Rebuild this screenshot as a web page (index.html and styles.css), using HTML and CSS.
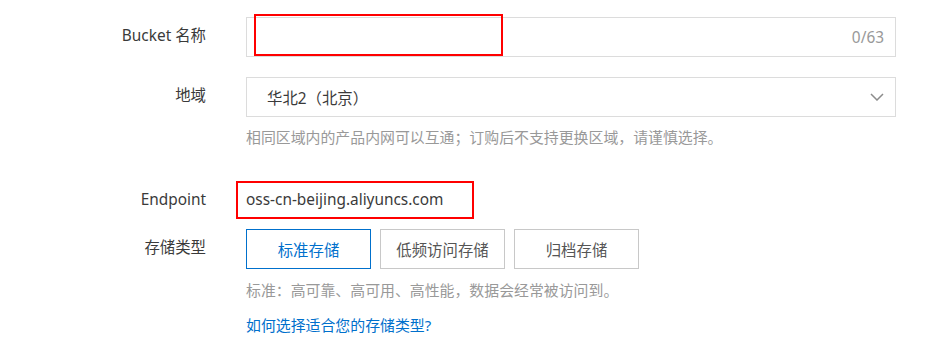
FILE: index.html
```html
<!DOCTYPE html>
<html lang="zh-CN">
<head>
<meta charset="utf-8">
<title>创建 Bucket</title>
<link rel="stylesheet" href="styles.css">
</head>
<body>
<div class="form">
  <div class="row row-name">
    <div class="label">Bucket 名称</div>
    <div class="control">
      <div class="input">
        <span class="count">0/63</span>
        <span class="mark"></span>
      </div>
    </div>
  </div>

  <div class="row row-region">
    <div class="label">地域</div>
    <div class="control">
      <div class="select">
        <span class="select-text">华北2（北京）</span>
        <svg class="chevron" width="14" height="8" viewBox="0 0 14 8"><polyline points="1,1 7,7 13,1" fill="none" stroke="#8c8c8c" stroke-width="1.5"/></svg>
      </div>
      <div class="help help-region">相同区域内的产品内网可以互通；订购后不支持更换区域，请谨慎选择。</div>
    </div>
  </div>

  <div class="row row-endpoint">
    <div class="label">Endpoint</div>
    <div class="control">
      <span class="endpoint">oss-cn-beijing.aliyuncs.com</span>
    </div>
  </div>

  <div class="row row-type">
    <div class="label">存储类型</div>
    <div class="control">
      <div class="btns">
        <span class="btn active">标准存储</span>
        <span class="btn">低频访问存储</span>
        <span class="btn">归档存储</span>
      </div>
      <div class="help help-type">标准：高可靠、高可用、高性能，数据会经常被访问到。</div>
      <a class="link" href="#">如何选择适合您的存储类型?</a>
    </div>
  </div>
</div>
</body>
</html>
```

FILE: styles.css
```css
html, body {
  margin: 0;
  padding: 0;
  background: #fff;
}
body {
  font-family: "Noto Sans", "Noto Sans CJK SC", sans-serif;
  color: #333;
  width: 945px;
  height: 347px;
  overflow: hidden;
}
.form {
  padding-top: 17px;
}
.row {
  display: grid;
  grid-template-columns: 206px 650px;
  column-gap: 40px;
  align-items: start;
}
.label {
  text-align: right;
  font-size: 15.4px;
  color: #3a3a3a;
  height: 40px;
  line-height: 38px;
  white-space: nowrap;
}
.control {
  display: flex;
  flex-direction: column;
  align-items: flex-start;
}
.input, .select {
  position: relative;
  box-sizing: border-box;
  width: 650px;
  height: 40px;
  border: 1px solid #dcdcdc;
  display: flex;
  align-items: center;
}
.input {
  justify-content: flex-end;
  padding-right: 11px;
}
.count {
  font-size: 15.4px;
  color: #999;
}
.mark {
  position: absolute;
  left: 7px;
  top: -4px;
  width: 249px;
  height: 42px;
  box-sizing: border-box;
  border: 2px solid #ff0000;
}
.row-region {
  margin-top: 20px;
}
.select {
  justify-content: space-between;
  padding: 0 11px 0 20px;
}
.select-text {
  font-size: 15.4px;
  color: #3a3a3a;
}
.help {
  font-size: 14.9px;
  color: #999;
  line-height: 20px;
  white-space: nowrap;
}
.help-region {
  margin-top: 10px;
}
.row-endpoint {
  margin-top: 34px;
}
.row-endpoint .label {
  height: 38px;
  line-height: 37px;
}
.endpoint {
  box-sizing: border-box;
  display: block;
  width: 238px;
  height: 38px;
  margin-left: -10px;
  padding-left: 8px;
  border: 2px solid #ff0000;
  font-size: 15.4px;
  line-height: 33px;
  color: #3a3a3a;
  white-space: nowrap;
}
.row-type {
  margin-top: 10px;
}
.btns {
  display: flex;
  gap: 9px;
}
.btn {
  box-sizing: border-box;
  width: 125px;
  height: 40px;
  border: 1px solid #c8c8c8;
  display: flex;
  align-items: center;
  justify-content: center;
  font-size: 15.4px;
  color: #555;
}
.btn.active {
  border-color: #0070cc;
  color: #0070cc;
}
.help-type {
  margin-top: 11px;
}
.link {
  margin-top: 15px;
  font-size: 14.9px;
  line-height: 20px;
  color: #0070cc;
  text-decoration: none;
}
```
